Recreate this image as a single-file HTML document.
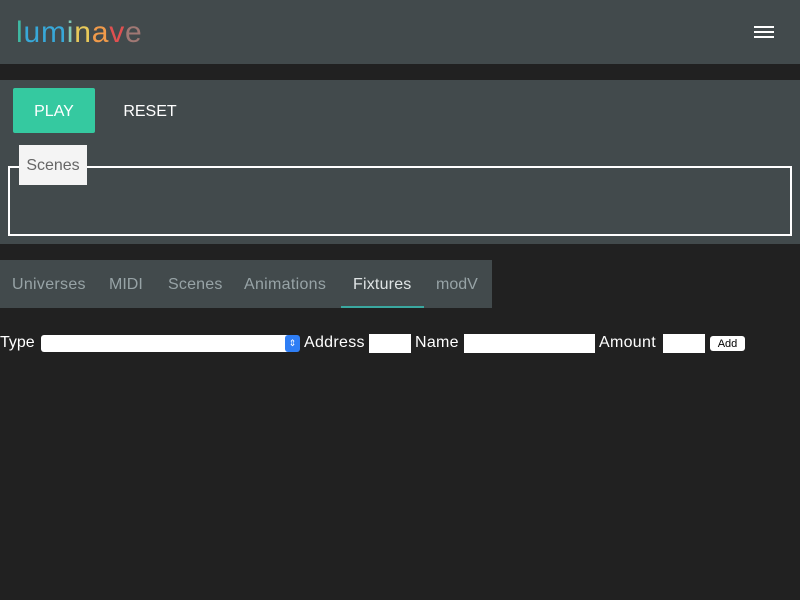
<!DOCTYPE html>
<html><head><style>
body{margin:0;width:800px;height:600px;background:#212121;font-family:"Liberation Sans",sans-serif;overflow:hidden;position:relative}
.abs{position:absolute}
</style></head><body>
<div class="abs" style="left:0;top:0;width:800px;height:64px;background:#424a4c"></div>
<div class="abs" style="left:16px;top:14px;font-size:30px;letter-spacing:0.8px;line-height:38px">
<span style="color:#3fb9a3">l</span><span style="color:#38a8d8">um</span><span style="color:#80c7b5">i</span><span style="color:#e8c95a">n</span><span style="color:#f09a4a">a</span><span style="color:#e05050">v</span><span style="color:#a07874">e</span></div>
<div class="abs" style="left:754px;top:26px;width:20px;height:2px;background:#fff;box-shadow:0 5px 0 #fff,0 10px 0 #fff"></div>
<div class="abs" style="left:0;top:80px;width:800px;height:164px;background:#424a4c"></div>
<div class="abs" style="left:13px;top:88px;width:82px;height:45px;background:#35c9a0;border-radius:2px;color:#fff;font-size:16px;line-height:47px;text-align:center">PLAY</div>
<div class="abs" style="left:110px;top:88px;width:80px;height:45px;color:#fff;font-size:16px;line-height:47px;text-align:center">RESET</div>
<div class="abs" style="left:8px;top:166px;width:780px;height:66px;border:2px solid #fff"></div>
<div class="abs" style="left:19px;top:145px;width:68px;height:40px;background:#f4f4f4;color:#666;font-size:16px;line-height:42px;text-align:center">Scenes</div>
<div class="abs" style="left:0;top:260px;width:492px;height:48px;background:#424a4c;font-size:16px;color:#97a3a6;line-height:50px">
<span class="abs" style="left:12px;letter-spacing:0.3px">Universes</span>
<span class="abs" style="left:109px">MIDI</span>
<span class="abs" style="left:168px;letter-spacing:0.2px">Scenes</span>
<span class="abs" style="left:244px;letter-spacing:0.3px">Animations</span>
<span class="abs" style="left:353px;color:#dfe4e5;letter-spacing:0.2px">Fixtures</span>
<span class="abs" style="left:436px">modV</span>
<div class="abs" style="left:341px;top:46px;width:83px;height:2px;background:#3aa8a0"></div>
</div>
<div class="abs" style="left:0;top:333px;font-size:16px;color:#fff;line-height:20px">Type</div>
<div class="abs" style="left:41px;top:335px;width:258px;height:17px;background:#fff;border-radius:3px"></div>
<div class="abs" style="left:285px;top:335px;width:15px;height:17px;background:#2f7ef5;border-radius:3px;color:#fff;font-size:9px;line-height:17px;text-align:center">⇕</div>
<div class="abs" style="left:304px;top:333px;font-size:16px;color:#fff;line-height:20px;letter-spacing:0.3px">Address</div>
<div class="abs" style="left:369px;top:334px;width:42px;height:19px;background:#fff"></div>
<div class="abs" style="left:415px;top:333px;font-size:16px;color:#fff;line-height:20px;letter-spacing:0.3px">Name</div>
<div class="abs" style="left:464px;top:334px;width:131px;height:19px;background:#fff"></div>
<div class="abs" style="left:599px;top:333px;font-size:16px;color:#fff;line-height:20px;letter-spacing:0.3px">Amount</div>
<div class="abs" style="left:663px;top:334px;width:42px;height:19px;background:#fff"></div>
<div class="abs" style="left:710px;top:336px;width:35px;height:15px;background:#fff;border-radius:3px;font-size:11px;line-height:16px;text-align:center;color:#000">Add</div>
</body></html>
